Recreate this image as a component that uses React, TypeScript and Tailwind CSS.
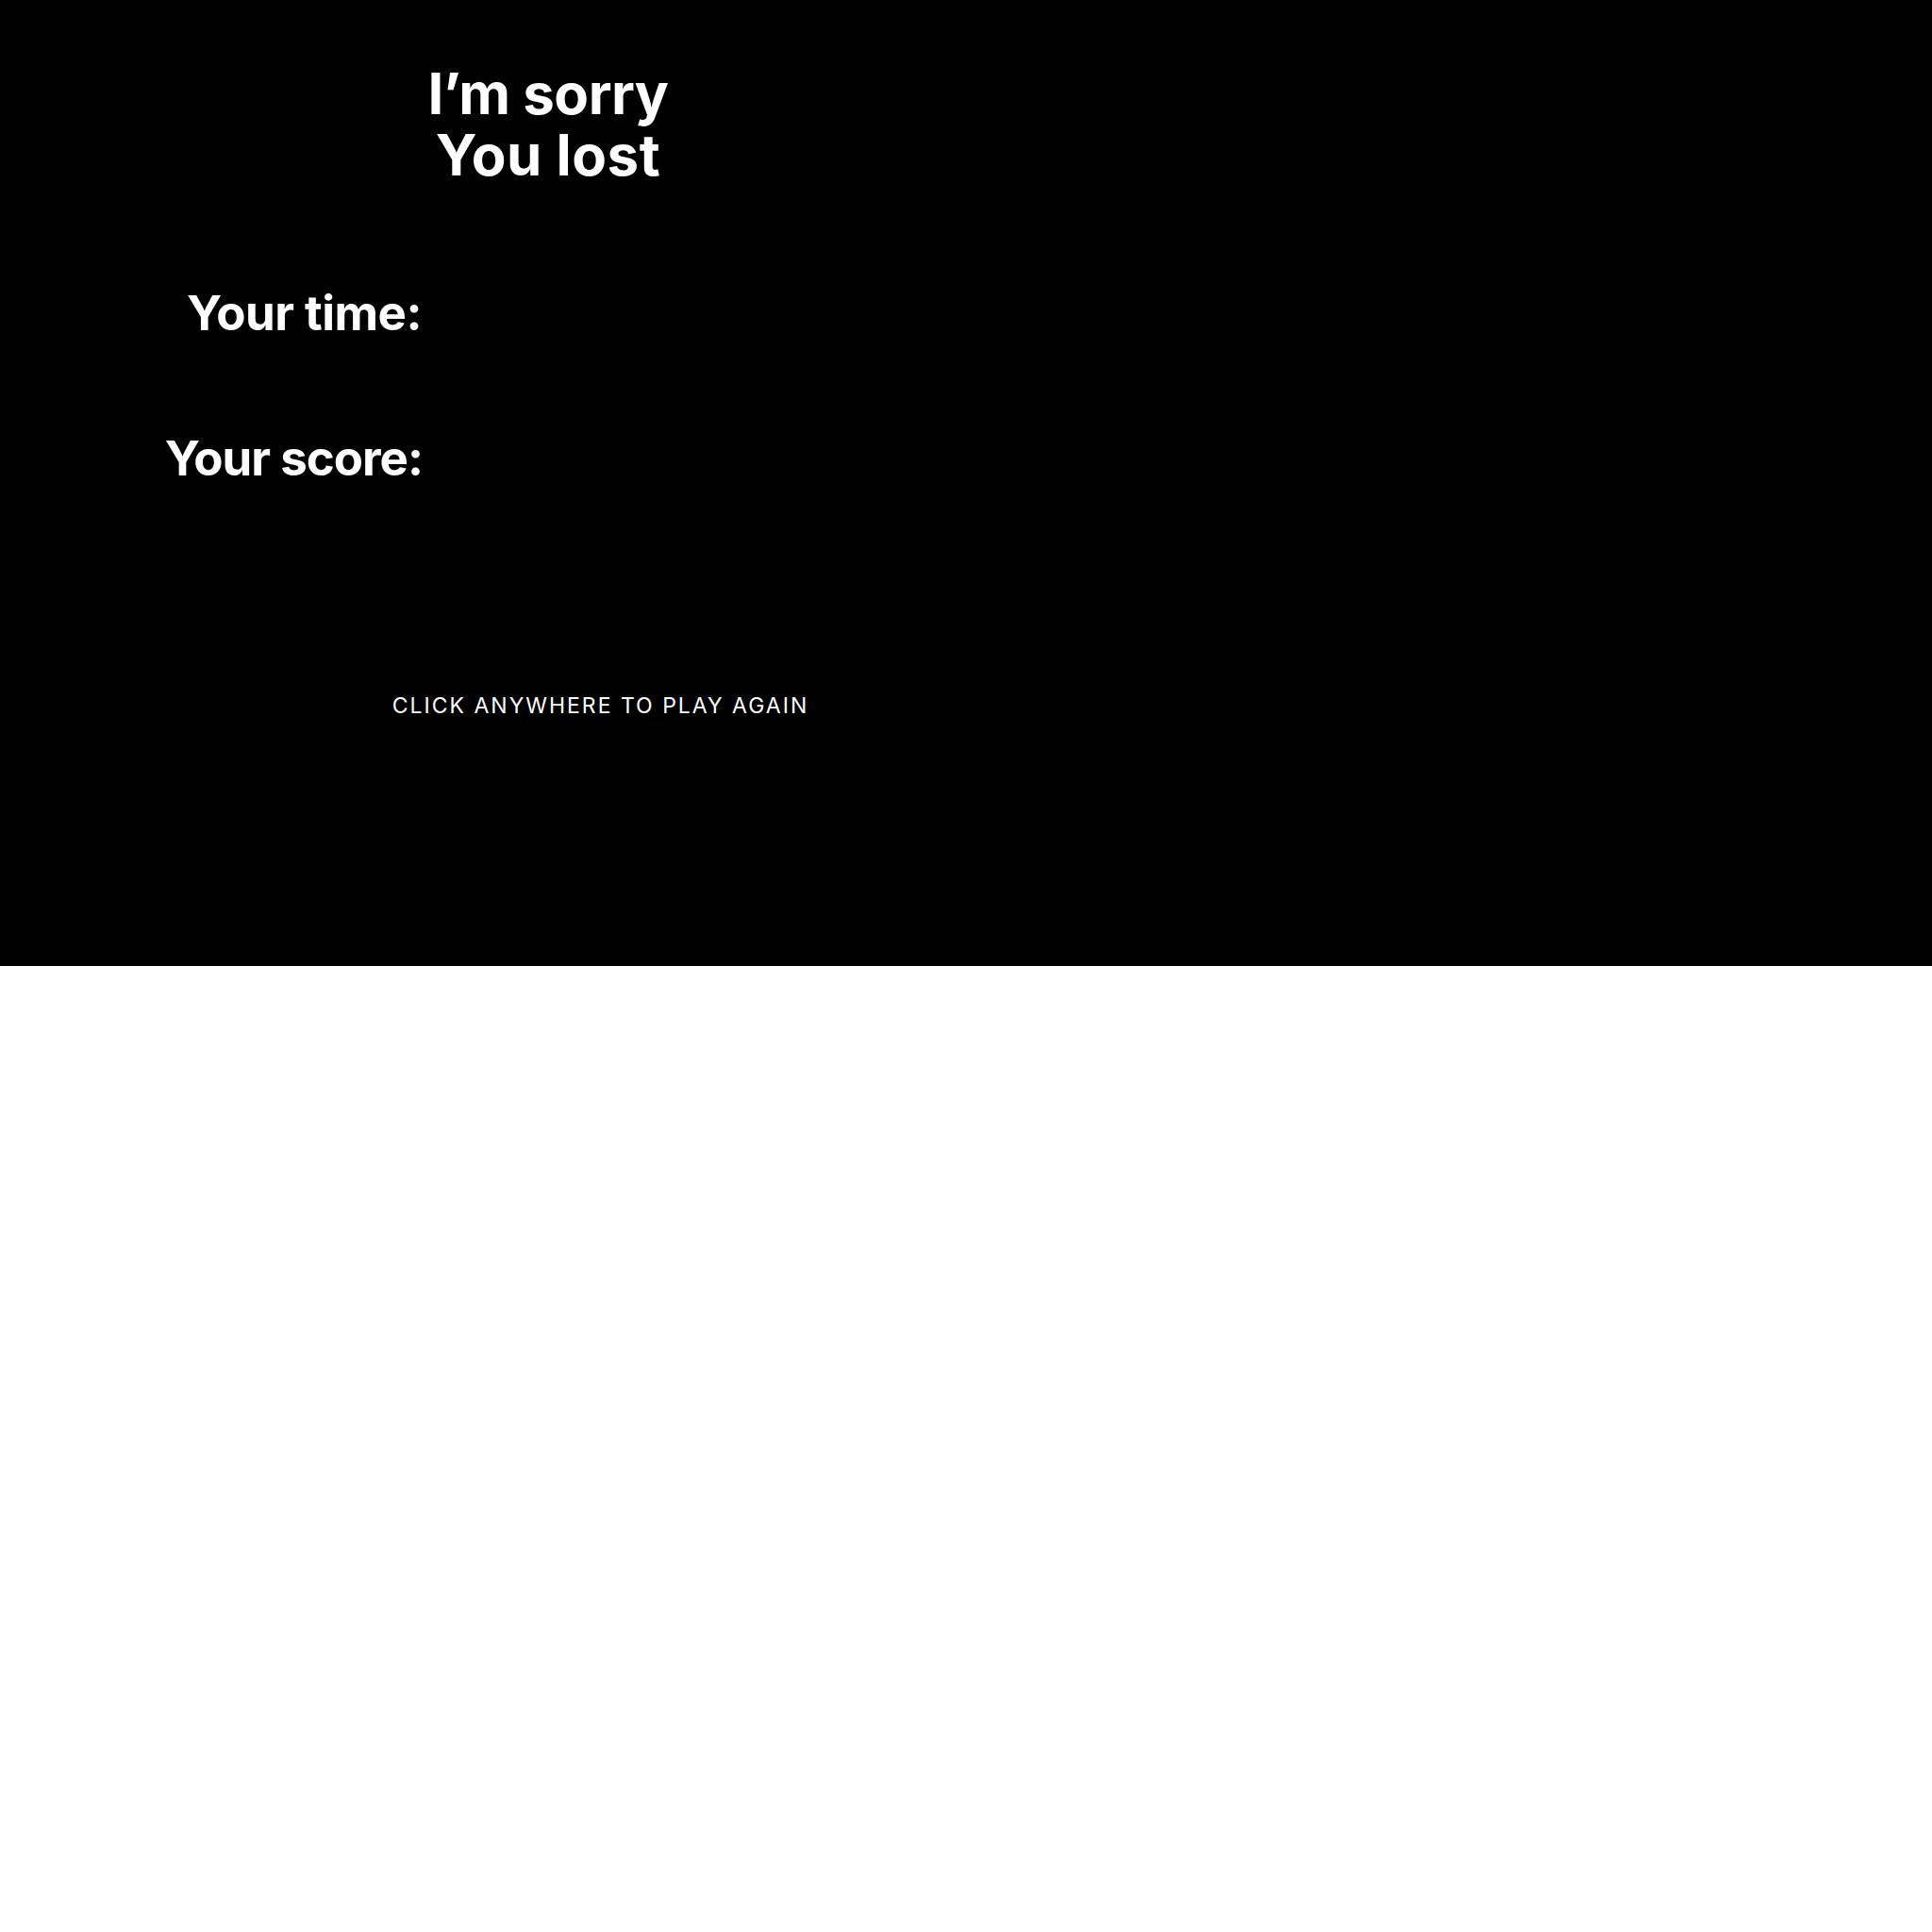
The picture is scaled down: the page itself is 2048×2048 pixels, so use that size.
const font = { fontFamily: '"Inter", "Open Sans", sans-serif', fontVariantLigatures: "none" as const };

const StatRow = ({ label, tight }: { label: string; tight?: boolean }) => (
  <div
    className={
      tight
        ? "w-[448px] text-right text-[51px] font-bold leading-[60px] tracking-[-1px]"
        : "w-[447px] text-right text-[51px] font-bold leading-[60px] tracking-[-0.5px]"
    }
  >
    {label}
  </div>
);

export default function App() {
  return (
    <div className="w-full">
      <section className="flex h-[1024px] w-full flex-col bg-black text-white" style={font}>
        {/* heading */}
        <div className="w-[1162px] pt-[67px] text-center text-[60px] font-bold leading-[65px]">
          <div className="tracking-[-0.5px]">I’m sorry</div>
          <div className="tracking-[0.5px]">You lost</div>
        </div>

        {/* stats */}
        <div className="mt-[105px] flex flex-col gap-[94px]">
          <StatRow label="Your time:" />
          <StatRow label="Your score:" tight />
        </div>

        {/* replay hint */}
        <div className="mt-[217px] w-[1273px] text-center text-[23px] leading-[30px] tracking-[2px]">
          CLICK ANYWHERE TO PLAY AGAIN
        </div>
      </section>
    </div>
  );
}
